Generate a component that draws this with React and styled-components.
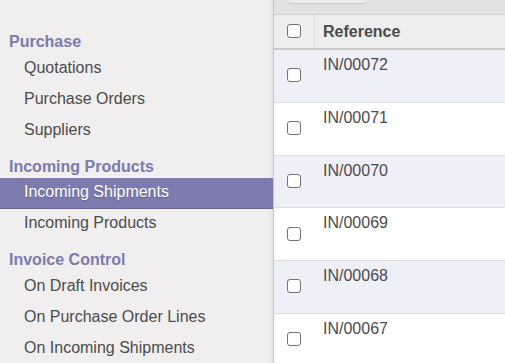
import styled, { createGlobalStyle } from "styled-components";

const menu = [
  {
    title: "Purchase",
    items: ["Quotations", "Purchase Orders", "Suppliers"],
  },
  {
    title: "Incoming Products",
    items: ["Incoming Shipments", "Incoming Products"],
  },
  {
    title: "Invoice Control",
    items: ["On Draft Invoices", "On Purchase Order Lines", "On Incoming Shipments"],
  },
];

const ACTIVE = "Incoming Shipments";

const shipments = ["IN/00072", "IN/00071", "IN/00070", "IN/00069", "IN/00068", "IN/00067"];

const App = () => {
  return (
    <>
      <GlobalStyle />
      <Page>
        <Sidebar>
          {menu.map(({ title, items }) => (
            <Section key={title}>
              <Heading>{title}</Heading>
              {items.map((item) => (
                <MenuItem key={item} $active={item === ACTIVE}>
                  {item}
                </MenuItem>
              ))}
            </Section>
          ))}
        </Sidebar>

        <Main>
          <Toolbar>
            <ToolButton />
          </Toolbar>
          <Table>
            <HeadRow>
              <CheckCell>
                <Checkbox />
              </CheckCell>
              <HeadCell>Reference</HeadCell>
            </HeadRow>
            {shipments.map((ref, i) => (
              <Row key={ref} $odd={i % 2 === 0}>
                <CheckCell>
                  <Checkbox />
                </CheckCell>
                <Cell>{ref}</Cell>
              </Row>
            ))}
          </Table>
        </Main>
      </Page>
    </>
  );
};

const GlobalStyle = createGlobalStyle`
  html, body {
    margin: 0;
    padding: 0;
    overflow: hidden;
  }
  body {
    font-family: "Liberation Sans", Arial, sans-serif;
    font-size: 16px;
    color: #4c4c4c;
  }
`;

const Page = styled.div`
  display: flex;
  width: 505px;
  height: 363px;
  overflow: hidden;
`;

const Sidebar = styled.nav`
  width: 273px;
  flex-shrink: 0;
  background-color: #f0eeee;
  border-right: 1px solid #c6c4ca;
  padding-top: 22px;
  box-shadow: inset -5px 0 5px -3px rgba(0, 0, 0, 0.06);
`;

const Section = styled.div`
  display: flex;
  flex-direction: column;
`;

const Heading = styled.div`
  padding: 10px 0 1.5px 9px;
  line-height: 20px;
  font-weight: bold;
  color: #7c7bad;
`;

const MenuItem = styled.div`
  padding: 4px 0 7px 24px;
  line-height: 20px;
  color: ${({ $active }) => ($active ? "#ffffff" : "#4c4c4c")};
  background-color: ${({ $active }) => ($active ? "#7c7bad" : "transparent")};
  box-shadow: ${({ $active }) =>
    $active ? "inset 0 -1px 0 rgba(0, 0, 0, 0.18)" : "none"};
  text-shadow: ${({ $active }) =>
    $active ? "0 1px 1px rgba(0, 0, 0, 0.2)" : "none"};
`;

const Main = styled.div`
  flex: 1;
  display: flex;
  flex-direction: column;
  background-color: #ffffff;
`;

const Toolbar = styled.div`
  height: 14px;
  flex-shrink: 0;
  background-color: #e2e2e2;
  border-bottom: 1px solid #cfcfcf;
  padding-left: 14px;
`;

const ToolButton = styled.div`
  width: 78px;
  height: 3px;
  background-color: #ececec;
  border-radius: 0 0 4px 4px;
  box-shadow: 0 1px 1px rgba(0, 0, 0, 0.12);
`;

const Table = styled.div`
  display: flex;
  flex-direction: column;
`;

const HeadRow = styled.div`
  display: flex;
  height: 33px;
  background-color: #eeeeee;
  border-bottom: 2px solid #cacaca;
`;

const Row = styled.div`
  display: flex;
  height: 51.75px;
  flex-shrink: 0;
  background-color: ${({ $odd }) => ($odd ? "#efeff8" : "#ffffff")};
  & + & {
    border-top: 1px solid #dddddd;
  }
`;

const CheckCell = styled.div`
  width: 40px;
  flex-shrink: 0;
  display: flex;
  align-items: center;
  justify-content: center;
`;

const HeadCell = styled.div`
  flex: 1;
  display: flex;
  align-items: center;
  padding-left: 8px;
  font-weight: bold;
  color: #4c4c4c;
  border-left: 1px solid #dcdcdc;
`;

const Cell = styled.div`
  flex: 1;
  padding: 5px 8px 0 9px;
  line-height: 20px;
  color: #4c4c4c;
`;

const Checkbox = styled.span`
  display: block;
  width: 12px;
  height: 12px;
  border: 1.5px solid #737373;
  border-radius: 3px;
  background-color: #ffffff;
  margin-top: -1px;
`;

export default App;
